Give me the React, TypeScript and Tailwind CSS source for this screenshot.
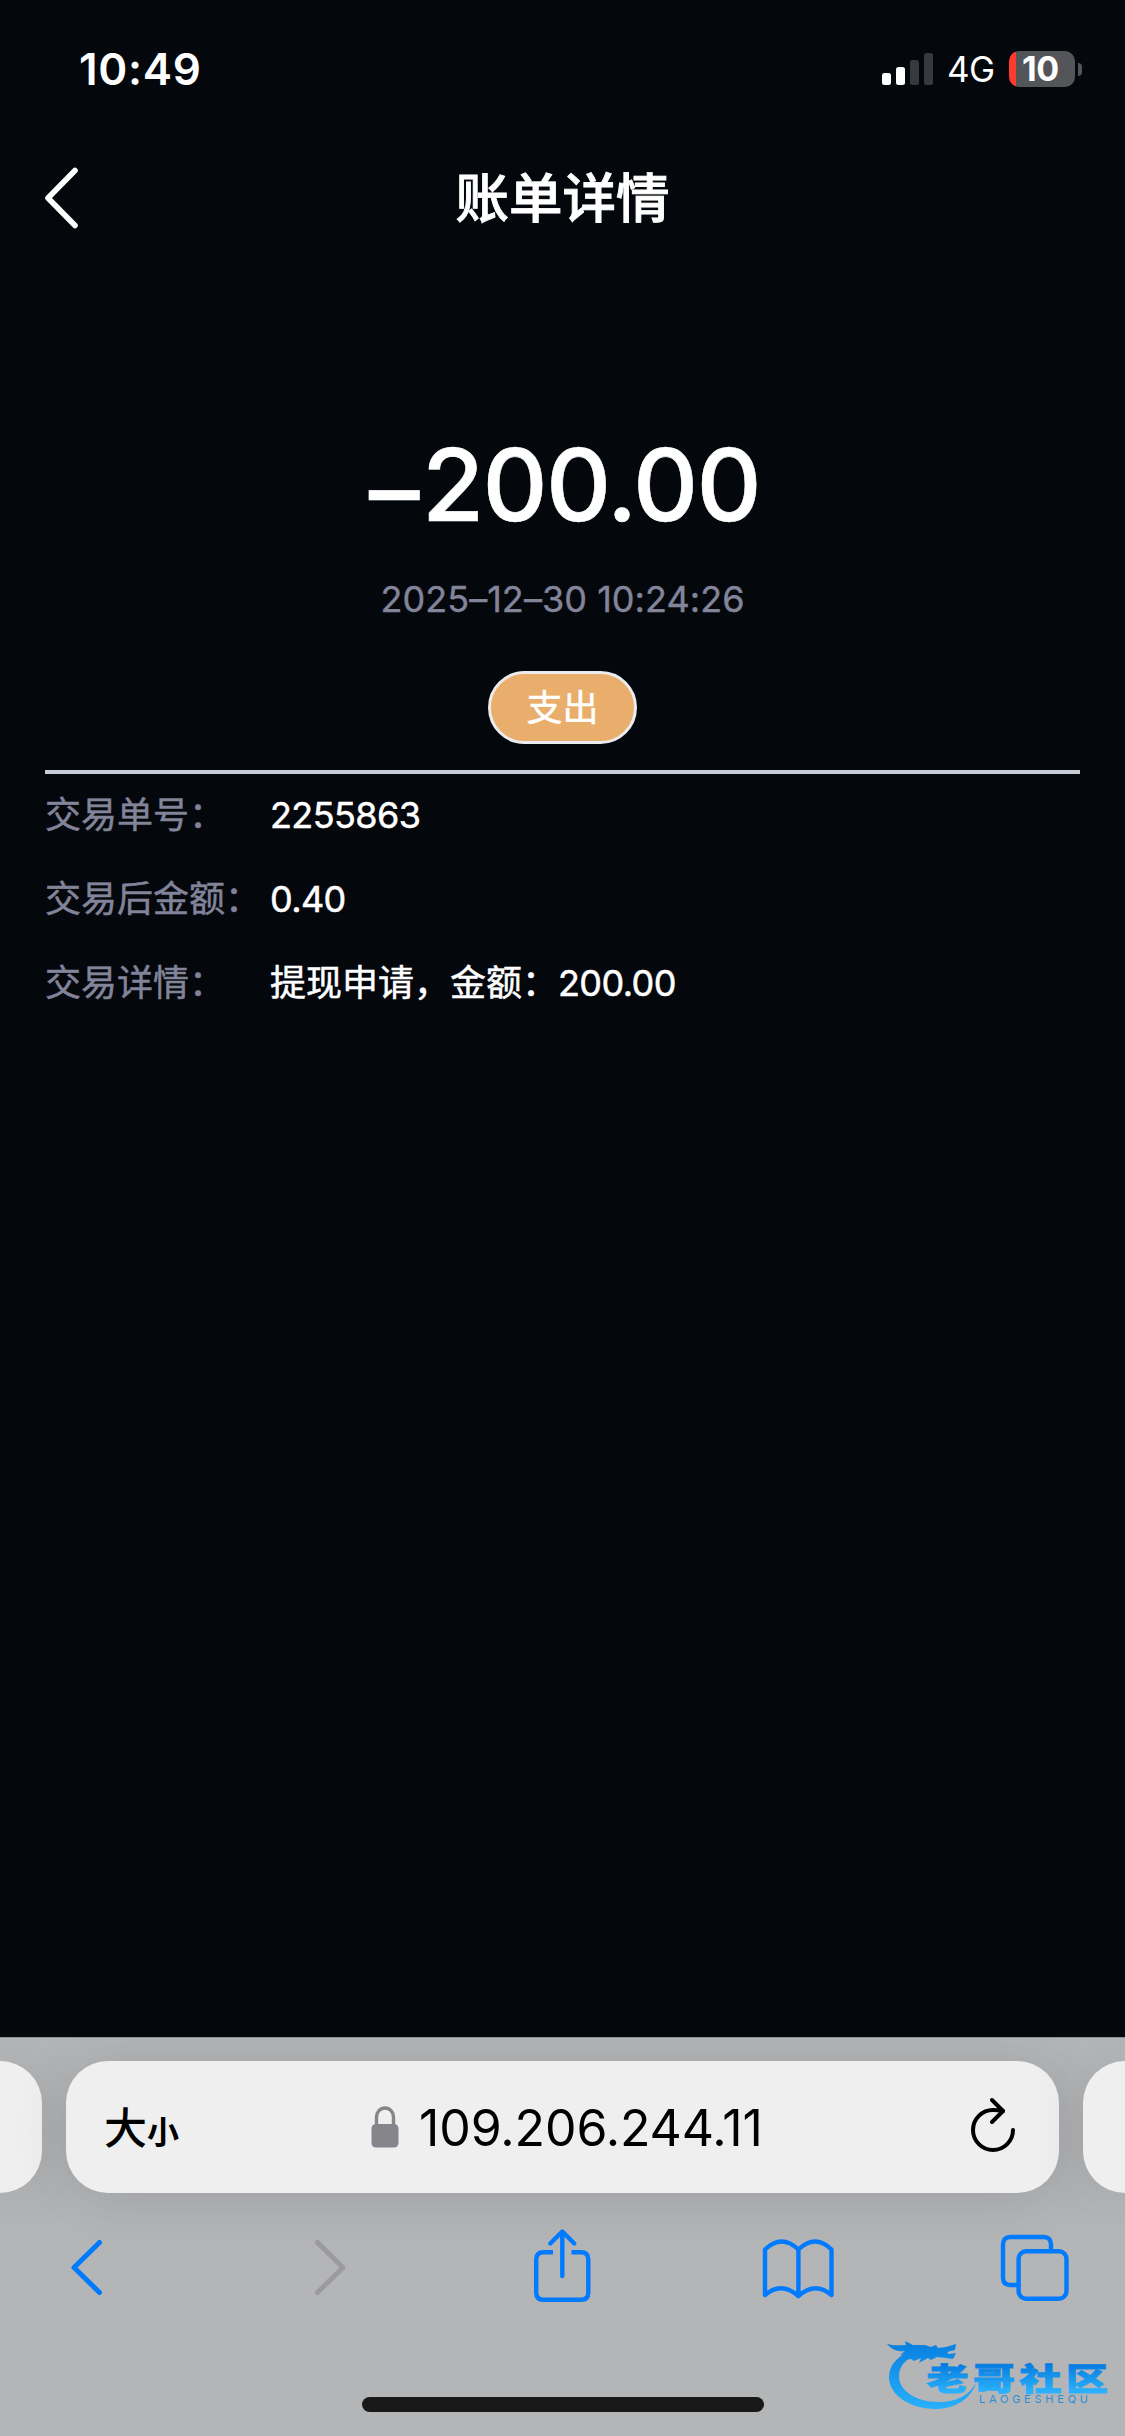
import type { ReactNode } from 'react'

const details = [
  { label: '交易单号：', value: '2255863' },
  { label: '交易后金额：', value: '0.40' },
  { label: '交易详情：', value: '提现申请，金额：200.00' },
]

function StatusBar() {
  return (
    <div className="flex h-[134px] shrink-0 items-start justify-between bg-[#04070b] pr-[43px] pl-[79px] text-white">
      <span className="mt-[42px] text-[44px] leading-[54px] font-semibold tracking-[0.7px]">10:49</span>
      <div className="mt-[49px] flex h-10 items-center">
        <svg width="52" height="32" viewBox="0 0 52 32">
          <rect x="0" y="20" width="9" height="12" rx="2.5" fill="#fff" />
          <rect x="14" y="14" width="9" height="18" rx="2.5" fill="#fff" />
          <rect x="28" y="7" width="9" height="25" rx="2.5" fill="#36393d" />
          <rect x="42" y="0" width="9" height="32" rx="2.5" fill="#36393d" />
        </svg>
        <span className="ml-[13px] w-[49px] text-[35px] leading-10 whitespace-nowrap tracking-[-0.5px]">4G</span>
        <div className="ml-[13px] flex h-9 w-[66px] items-center rounded-[10px] bg-linear-to-r from-[#ff3b30] from-[7px] to-[#545558] to-[7px]">
          <span className="ml-[13px] text-[34px] leading-[42px] font-bold tracking-[-0.4px]">10</span>
        </div>
        <div className="ml-[3px] h-[13px] w-[4px] rounded-r-full bg-[#545558]" />
      </div>
    </div>
  )
}

function Header() {
  return (
    <header className="grid h-[128px] shrink-0 grid-cols-3 items-center">
      <svg className="ml-[38px]" width="50" height="70" viewBox="0 0 50 70" fill="none">
        <path d="M37 7.5 10 35l27 27.5" stroke="#fff" strokeWidth="5.6" strokeLinecap="round" strokeLinejoin="round" />
      </svg>
      <h1 className="pt-[3px] text-center text-[53.5px] font-medium whitespace-nowrap text-white [-webkit-text-stroke:0.9px_#fff]">
        账单详情
      </h1>
    </header>
  )
}

function ToolIcon({ color = '#007aff', width = 4.4, children }: { color?: string; width?: number; children: ReactNode }) {
  return (
    <svg
      width="80"
      height="80"
      viewBox="0 0 80 80"
      fill="none"
      stroke={color}
      strokeWidth={width}
      strokeLinecap="round"
      strokeLinejoin="round"
    >
      {children}
    </svg>
  )
}

function Watermark() {
  return (
    <svg className="absolute right-0 bottom-0" width="255" height="116" viewBox="0 0 255 116">
      <defs>
        <linearGradient id="ring" x1="0" y1="22" x2="0" y2="89" gradientUnits="userSpaceOnUse">
          <stop offset="0" stopColor="#077fe0" />
          <stop offset="1" stopColor="#29b0fb" />
        </linearGradient>
        <linearGradient id="name" x1="0" y1="43" x2="0" y2="72" gradientUnits="userSpaceOnUse">
          <stop offset="0" stopColor="#0379df" />
          <stop offset="1" stopColor="#2cb2fc" />
        </linearGradient>
      </defs>
      <g fill="url(#ring)">
        <path d="M46 29C28 34 19 45 19 57c0 18 21 32 46 32 20 0 36-10 41-26-6 12-20 19-37 19-23 0-40-11-40-26 0-11 9-19 23-25Z" />
        <path d="M17 24c7 2 13 1 19 1l-1-4 8 4 12 0 6 2 5-2 2 3 8-1 10-3-1 6-8 2 2 2 7-1-3 6-7-1-9-1-6 3-3-2-9 5 2-5-7 3-3-2-5 1 3-6-9 1 5-4c-7 1-13-1-18-7Z" />
      </g>
      <g fill="url(#name)" stroke="url(#name)" strokeWidth="0.9">
        {['老', '哥', '社', '区'].map((ch, i) => (
          <text
            key={ch}
            x={56.5 + i * 46.5}
            y="69.5"
            textLength="42"
            lengthAdjust="spacingAndGlyphs"
            fontSize="31"
            fontWeight="900"
          >
            {ch}
          </text>
        ))}
      </g>
      <text x="109" y="83" textLength="109" fontSize="11" fill="#2a8fd6">
        LAOGESHEQU
      </text>
    </svg>
  )
}

function BrowserBar() {
  return (
    <footer className="relative flex h-[399px] shrink-0 flex-col overflow-hidden border-t border-[#8d8f91] bg-[#b4b5b7]">
      <div className="mt-[23px] flex h-[132px] shrink-0 gap-6">
        <div className="w-[42px] rounded-r-[42px] bg-[#efefef] shadow-[0_6px_56px_rgba(0,0,0,0.12)]" />
        <div className="flex w-[993px] items-center rounded-[42px] bg-[#efefef] pr-[42px] pl-[38px] text-black shadow-[0_6px_56px_rgba(0,0,0,0.12)]">
          <div className="flex w-[267px] items-baseline pt-[2px] leading-none">
            <span className="text-[43px] font-medium">大</span>
            <span className="text-[32px] font-bold">小</span>
          </div>
          <svg width="28" height="42" viewBox="0 0 28 42">
            <path d="M5.5 20V11a8.5 9 0 0 1 17 0v9" fill="none" stroke="#85858b" strokeWidth="3.4" />
            <rect x="0.5" y="18" width="27" height="23.5" rx="4.5" fill="#85858b" />
          </svg>
          <span className="ml-[20px] pt-[2px] text-[50px] leading-[60px] whitespace-nowrap tracking-[-0.1px]">109.206.244.11</span>
          <svg className="ml-auto" width="50" height="60" viewBox="0 0 50 60" fill="none" stroke="#000" strokeWidth="4" strokeLinecap="round" strokeLinejoin="round">
            <path d="M46 33A20 20 0 1 1 26 13q5 0 10 1" />
            <path d="M25 3 36 14 25 25" />
          </svg>
        </div>
        <div className="w-[42px] rounded-l-[42px] bg-[#efefef] shadow-[0_6px_56px_rgba(0,0,0,0.12)]" />
      </div>

      <nav className="mt-[33px] flex justify-between pr-[50px] pl-[47px]">
        <ToolIcon width={5}>
          <path d="M52.5 16.5 27 41.5l25.5 25" />
        </ToolIcon>
        <ToolIcon width={5} color="#9b9b9d">
          <path d="M33.5 16.5 59 41.5l-25.5 25" />
        </ToolIcon>
        <ToolIcon>
          <path d="M32 26.3H22.5q-7.3 0-7.3 7.3V66.500q0 7.3 7.3 7.3H60q7.3 0 7.3-7.3V33.600q0-7.3-7.3-7.3H50.5" strokeLinecap="butt" />
          <path d="M41.3 50V6.5M29.3 17.5l12-12 12 12" />
        </ToolIcon>
        <ToolIcon>
          <path d="M7 23.5q16.7-16 33.4 0 16.7-16 33.1 0V69q-16.4-14-33.1 1.2Q23.7 55 7 69ZM40.4 23.5V70" />
        </ToolIcon>
        <ToolIcon>
          <path d="M56 25V18.500q0-7.5-7.5-7.5h-33Q8 11 8 18.5v33Q8 59 15.5 59H23.5" />
          <rect x="23.6" y="25.3" width="47.9" height="47.4" rx="7.5" />
        </ToolIcon>
      </nav>

      <div className="mt-[91px] ml-[362px] h-[15px] w-[402px] rounded-full bg-[#191919]" />
      <Watermark />
    </footer>
  )
}

export default function App() {
  return (
    <div
      lang="zh-CN"
      className="flex h-[2436px] w-[1125px] flex-col overflow-hidden bg-[#04070c] font-['Inter','Noto_Sans_CJK_SC',sans-serif]"
    >
      <StatusBar />
      <Header />

      <main className="flex flex-1 flex-col px-[45px]">
        <section className="flex flex-col items-center">
          <p className="mt-[162px] h-[120px] pl-[4px] text-[101px] leading-[120px] font-medium tracking-[-1.7px] text-white [-webkit-text-stroke:0.6px_#fff]">
            <span className="mr-[4px] inline-block align-[-5px] leading-none">–</span>200.00
          </p>
          <time className="mt-[33px] text-[36px] leading-[44px] tracking-[0.05px] text-[#82849a] [-webkit-text-stroke:0.4px_#82849a]">
            2025–12–30 10:24:26
          </time>
          <span className="mt-[50px] flex h-[73px] w-[149px] items-center justify-center rounded-full border-[3px] border-[#ebebed] bg-[#e9ae6b] text-[36px] leading-none text-white [-webkit-text-stroke:0.5px_#fff]">
            支出
          </span>
        </section>

        <div className="mt-[26px] h-[4px] bg-[#c9cdd8]" />

        <dl className="-mt-px">
          {details.map((item) => (
            <div key={item.label} className="flex h-[84px] items-center text-[36px] leading-[84px] whitespace-nowrap">
              <dt className="w-[225px] text-[#82849a] [-webkit-text-stroke:0.5px_#82849a]">{item.label}</dt>
              <dd className="text-white [-webkit-text-stroke:0.5px_#fff]">
                {/* digits run slightly tighter than the Chinese text beside them */}
                {item.value.split(/([\d.]+)/).map((part, i) => (
                  <span key={i} className={i % 2 ? 'tracking-[-0.6px]' : ''}>
                    {part}
                  </span>
                ))}
              </dd>
            </div>
          ))}
        </dl>
      </main>

      <BrowserBar />
    </div>
  )
}
